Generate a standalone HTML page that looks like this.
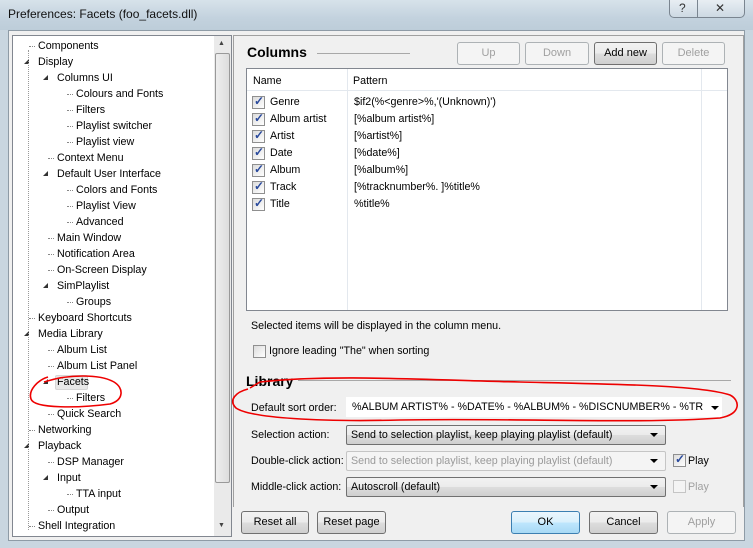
<!DOCTYPE html>
<html><head><meta charset="utf-8"><style>
*{margin:0;padding:0;box-sizing:border-box}
body{width:753px;height:548px;overflow:hidden;position:relative;font-family:"Liberation Sans",sans-serif;font-size:10.7px;color:#000;background:#c9d6e0}
.a{position:absolute;white-space:nowrap}
.title{left:0;top:0;width:753px;height:30px;background:linear-gradient(180deg,#d7e2ea,#c3d2de 60%,#bdcdd9)}
.dlg{left:8px;top:30px;width:737px;height:511px;background:#f0f0f0;border:1px solid #8e9ba6}
.btn{position:absolute;height:23px;border:1px solid #707070;border-radius:3px;background:linear-gradient(#f2f2f2,#ebebeb 50%,#dddddd 51%,#cfcfcf);text-align:center;line-height:21px;font-size:11px}
.dis{border-color:#adb2b5;background:#f4f4f4;color:#a0a0a0}
.cb{position:absolute;width:13px;height:13px;border:1px solid #8f8f8f;background:linear-gradient(135deg,#dcdcdc,#fff)}
.cb.c::after{content:"✓";position:absolute;left:1px;top:-3px;font-size:12px;color:#2a4a9c;font-weight:bold}
.combo{position:absolute;height:20px;border:1px solid #707070;border-radius:2px;background:linear-gradient(#f2f2f2,#ebebeb 50%,#dddddd 51%,#cfcfcf);padding-left:4px;line-height:18px}
.combo::after{content:"";position:absolute;right:7px;top:7px;border:4px solid transparent;border-top:4px solid #000;border-bottom:0}
.tri{position:absolute;width:0;height:0;border-left:5px solid transparent;border-bottom:5px solid #333}
.stub{position:absolute;width:6px;border-top:1px dotted #888}
</style></head><body>
<div class="a title"></div>
<div class="a" style="left:8px;top:7px;font-size:12px;color:#111">Preferences: Facets (foo_facets.dll)</div>
<div class="a" style="left:669px;top:0;width:76px;height:18px;border:1px solid #7a8590;border-top:none;border-radius:0 0 5px 5px;background:linear-gradient(#e8eef3,#cdd9e3)"></div>
<div class="a" style="left:697px;top:0;width:1px;height:18px;background:#7a8590"></div>
<div class="a" style="left:679px;top:1px;font-size:12px;color:#333">?</div>
<div class="a" style="left:715px;top:1px;font-size:12px;color:#333">✕</div>
<div class="a dlg"></div>
<!-- tree -->
<div class="a" style="left:12px;top:35px;width:220px;height:502px;background:#fff;border:1px solid #828790"></div>
<div class="a" style="left:214px;top:36px;width:17px;height:500px;background:#eaeaea"></div>
<div class="a" style="left:215px;top:53px;width:15px;height:430px;background:linear-gradient(90deg,#eee,#ddd);border:1px solid #999;border-radius:2px"></div>
<div class="a" style="left:218px;top:40px;font-size:7px;color:#444">▲</div>
<div class="a" style="left:218px;top:522px;font-size:7px;color:#444">▼</div>
<div id="tree"></div>
<div class="a" style="left:55px;top:375px;width:33px;height:15px;background:#e8e8e8;border:1px solid #d6d6d6;border-radius:2px"></div>
<script>
var it=[["Components",0],["Display",0,1],["Columns UI",1,1],["Colours and Fonts",2],["Filters",2],["Playlist switcher",2],["Playlist view",2],["Context Menu",1],["Default User Interface",1,1],["Colors and Fonts",2],["Playlist View",2],["Advanced",2],["Main Window",1],["Notification Area",1],["On-Screen Display",1],["SimPlaylist",1,1],["Groups",2],["Keyboard Shortcuts",0],["Media Library",0,1],["Album List",1],["Album List Panel",1],["Facets",1,1],["Filters",2],["Quick Search",1],["Networking",0],["Playback",0,1],["DSP Manager",1],["Input",1,1],["TTA input",2],["Output",1],["Shell Integration",0]];
var h="";it.forEach(function(t,i){var y=46+i*16,l=t[1],x=38+19*l;
if(t[2])h+='<div class="tri" style="left:'+(24+19*l)+'px;top:'+(y-3)+'px"></div>';else h+='<div class="stub" style="left:'+(x-9)+'px;top:'+y+'px"></div>';
h+='<div class="a" style="left:'+x+'px;top:'+(y-6)+'px;z-index:2">'+t[0]+'</div>';});
document.getElementById("tree").innerHTML=h;
</script>
<div class="a" style="left:28px;top:50px;height:480px;border-left:1px dotted #999"></div>
<!-- right panel -->
<div class="a" style="left:233px;top:35px;width:511px;height:472px;border:1px solid #a0a0a0;border-bottom:none;border-right:1px solid #a0a0a0"></div>
<div class="a" style="left:247px;top:44px;font-size:14px;font-weight:bold">Columns</div>
<div class="a" style="left:317px;top:53px;width:93px;border-top:1px solid #a8a8a8"></div>
<div class="btn dis" style="left:457px;top:42px;width:63px">Up</div>
<div class="btn dis" style="left:525px;top:42px;width:64px">Down</div>
<div class="btn" style="left:594px;top:42px;width:63px">Add new</div>
<div class="btn dis" style="left:662px;top:42px;width:63px">Delete</div>
<div class="a" style="left:246px;top:68px;width:482px;height:243px;background:#fff;border:1px solid #828790"></div>
<div class="a" style="left:247px;top:69px;width:480px;height:22px;border-bottom:1px solid #e3e8ee"></div>
<div class="a" style="left:347px;top:69px;height:241px;border-left:1px solid #e3e8ee"></div>
<div class="a" style="left:701px;top:69px;height:241px;border-left:1px solid #e3e8ee"></div>
<div class="a" style="left:253px;top:75px">Name</div>
<div class="a" style="left:353px;top:75px">Pattern</div>
<div id="rows"></div>
<script>
var r=[["Genre","$if2(%&lt;genre&gt;%,'(Unknown)')"],["Album artist","[%album artist%]"],["Artist","[%artist%]"],["Date","[%date%]"],["Album","[%album%]"],["Track","[%tracknumber%. ]%title%"],["Title","%title%"]];
var h="";r.forEach(function(t,i){var y=102+i*17;h+='<div class="cb c" style="left:252px;top:'+(y-6)+'px"></div><div class="a" style="left:270px;top:'+(y-6)+'px">'+t[0]+'</div><div class="a" style="left:354px;top:'+(y-6)+'px">'+t[1]+'</div>';});
document.getElementById("rows").innerHTML=h;
</script>
<div class="a" style="left:251px;top:320px">Selected items will be displayed in the column menu.</div>
<div class="cb" style="left:253px;top:345px"></div>
<div class="a" style="left:269px;top:345px">Ignore leading "The" when sorting</div>
<div class="a" style="left:246px;top:373px;font-size:14px;font-weight:bold">Library</div>
<div class="a" style="left:298px;top:380px;width:433px;border-top:1px solid #a8a8a8"></div>
<div class="a" style="left:251px;top:402px">Default sort order:</div>
<div class="a" style="left:346px;top:397px;width:376px;height:20px;background:#fff;padding-left:6px;line-height:20px;overflow:hidden;padding-right:20px">%ALBUM ARTIST% - %DATE% - %ALBUM% - %DISCNUMBER% - %TR</div>
<div class="a" style="left:711px;top:406px;border:4px solid transparent;border-top:4px solid #000;border-bottom:0"></div>
<div class="a" style="left:251px;top:429px">Selection action:</div>
<div class="combo" style="left:346px;top:425px;width:320px">Send to selection playlist, keep playing playlist (default)</div>
<div class="a" style="left:251px;top:455px">Double-click action:</div>
<div class="combo" style="left:346px;top:451px;width:320px;background:#f4f4f4;border-color:#c5c5c5;color:#9a9a9a">Send to selection playlist, keep playing playlist (default)</div>
<div class="cb c" style="left:673px;top:454px"></div><div class="a" style="left:688px;top:455px">Play</div>
<div class="a" style="left:251px;top:481px">Middle-click action:</div>
<div class="combo" style="left:346px;top:477px;width:320px">Autoscroll (default)</div>
<div class="cb" style="left:673px;top:480px;border-color:#c5c5c5;background:#f4f4f4"></div><div class="a" style="left:688px;top:481px;color:#a0a0a0">Play</div>
<div class="btn" style="left:241px;top:511px;width:68px">Reset all</div>
<div class="btn" style="left:317px;top:511px;width:69px">Reset page</div>
<div class="btn" style="left:511px;top:511px;width:69px;border-color:#3c7fb1;background:linear-gradient(#eaf6fd,#d9f0fc 50%,#bee6fd 51%,#a7d9f5)">OK</div>
<div class="btn" style="left:589px;top:511px;width:69px">Cancel</div>
<div class="btn dis" style="left:667px;top:511px;width:69px">Apply</div>
<svg class="a" style="left:0;top:0;z-index:5" width="753" height="548"><g fill="none" stroke="#e00" stroke-width="1.6">
<path d="M48 377 C38 380 28 390 31 399 C34 409 80 408 110 404 C124 400 124 388 114 382 C100 374 68 374 44 382"/>
<path d="M248 389 C236 392 228 400 236 408 C250 418 320 422 400 420 C520 418 640 424 720 418 C742 414 740 400 730 395 C700 385 610 384 520 382 C430 380 330 374 260 382 L250 388"/>
</g></svg>
</body></html>
